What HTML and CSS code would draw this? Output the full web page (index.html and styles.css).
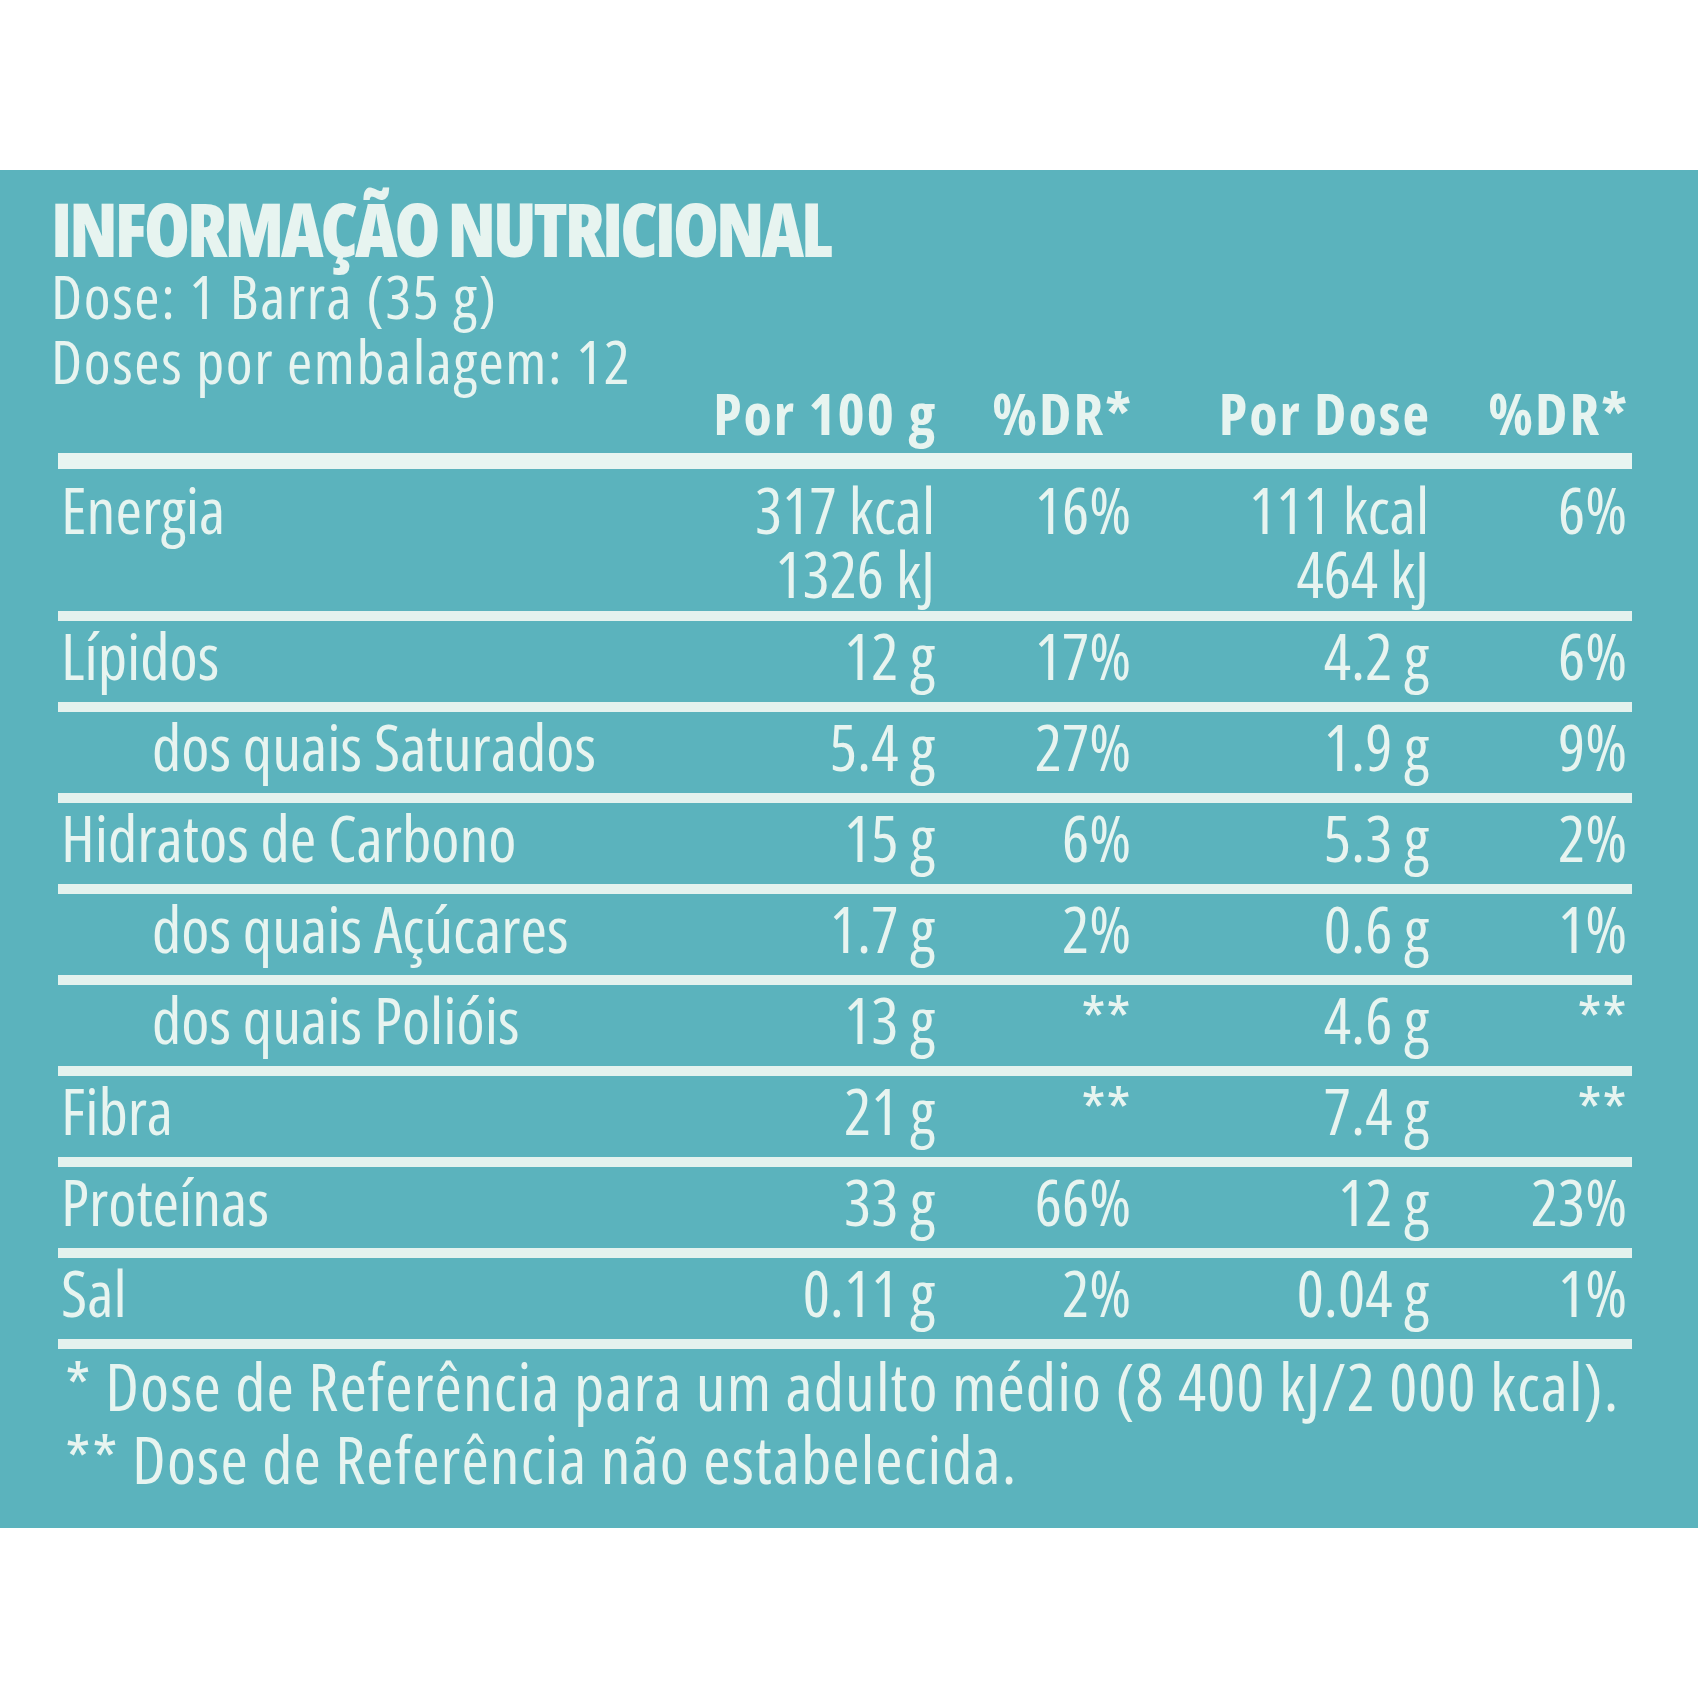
FILE: index.html
```html
<!DOCTYPE html>
<html lang="pt">
<head>
<meta charset="utf-8">
<title>Informação Nutricional</title>
<link rel="stylesheet" href="styles.css">
</head>
<body>
<section class="label">
  <h1 class="title">INFORMAÇÃO NUTRICIONAL</h1>
  <p class="meta">Dose: 1 Barra (35 g)</p>
  <p class="meta">Doses por embalagem: 12</p>
  <div class="table">
    <div class="row head">
      <span class="name"></span>
      <span class="num">Por 100 g</span>
      <span class="num">%DR*</span>
      <span class="num">Por Dose</span>
      <span class="num last">%DR*</span>
    </div>
    <div class="row energy">
      <span class="name">Energia</span>
      <span class="num">317 kcal<br>1326 kJ</span>
      <span class="num">16%</span>
      <span class="num">111 kcal<br>464 kJ</span>
      <span class="num last">6%</span>
    </div>
    <div class="row">
      <span class="name">Lípidos</span>
      <span class="num">12 g</span>
      <span class="num">17%</span>
      <span class="num">4.2 g</span>
      <span class="num last">6%</span>
    </div>
    <div class="row">
      <span class="name sub">dos quais Saturados</span>
      <span class="num">5.4 g</span>
      <span class="num">27%</span>
      <span class="num">1.9 g</span>
      <span class="num last">9%</span>
    </div>
    <div class="row">
      <span class="name">Hidratos de Carbono</span>
      <span class="num">15 g</span>
      <span class="num">6%</span>
      <span class="num">5.3 g</span>
      <span class="num last">2%</span>
    </div>
    <div class="row">
      <span class="name sub">dos quais Açúcares</span>
      <span class="num">1.7 g</span>
      <span class="num">2%</span>
      <span class="num">0.6 g</span>
      <span class="num last">1%</span>
    </div>
    <div class="row">
      <span class="name sub">dos quais Polióis</span>
      <span class="num">13 g</span>
      <span class="num">**</span>
      <span class="num">4.6 g</span>
      <span class="num last">**</span>
    </div>
    <div class="row">
      <span class="name">Fibra</span>
      <span class="num">21 g</span>
      <span class="num">**</span>
      <span class="num">7.4 g</span>
      <span class="num last">**</span>
    </div>
    <div class="row">
      <span class="name">Proteínas</span>
      <span class="num">33 g</span>
      <span class="num">66%</span>
      <span class="num">12 g</span>
      <span class="num last">23%</span>
    </div>
    <div class="row end">
      <span class="name">Sal</span>
      <span class="num">0.11 g</span>
      <span class="num">2%</span>
      <span class="num">0.04 g</span>
      <span class="num last">1%</span>
    </div>
  </div>
  <p class="note">* Dose de Referência para um adulto médio (8 400 kJ/2 000 kcal).</p>
  <p class="note">** Dose de Referência não estabelecida.</p>
</section>
</body>
</html>
```
FILE: styles.css
```css
html, body {
  margin: 0;
  padding: 0;
  background: #ffffff;
}

body {
  padding-top: 170px;
  font-family: "Open Sans", "Noto Sans", sans-serif;
  font-stretch: 75%;
  color: #e7f4f0;
}

.label {
  background: #5bb3bd;
  height: 1358px;
  box-sizing: border-box;
  padding: 25px 0 0 51px;
}

.title {
  margin: 0;
  font-size: 74px;
  line-height: 68px;
  font-weight: 800;
  letter-spacing: -3px;
}

.meta {
  margin: 0;
  font-size: 61px;
  line-height: 65px;
  font-weight: 400;
  letter-spacing: 1.6px;
}

.table {
  margin-left: 7px;
  width: 1574px;
}

.row {
  display: grid;
  grid-template-columns: 642px 235px 196px 298px 203px;
  border-top: 10px solid #e4f2ee;
  height: 91px;
  box-sizing: border-box;
  padding-top: 3px;
  font-size: 64px;
  line-height: 64px;
}

.row.head {
  border-top: 0;
  padding-top: 0;
  font-size: 58px;
  line-height: 40px;
  font-weight: 700;
  letter-spacing: 2px;
  border-bottom: 16px solid #e8f5f1;
  height: 76px;
}

.row.head .num {
  margin-right: -2px;
}

.row.energy {
  border-top: 0;
  height: 142px;
  padding-top: 9px;
}

.row.end {
  border-bottom: 10px solid #e4f2ee;
  height: 101px;
}

.name {
  padding-left: 3px;
  white-space: nowrap;
}

.name.sub {
  padding-left: 94px;
}

.num {
  text-align: right;
  white-space: nowrap;
}

.num.last {
  padding-right: 5px;
}

.note {
  margin: 0;
  padding-left: 14px;
  font-size: 66px;
  line-height: 73px;
  letter-spacing: 1.1px;
}
```
